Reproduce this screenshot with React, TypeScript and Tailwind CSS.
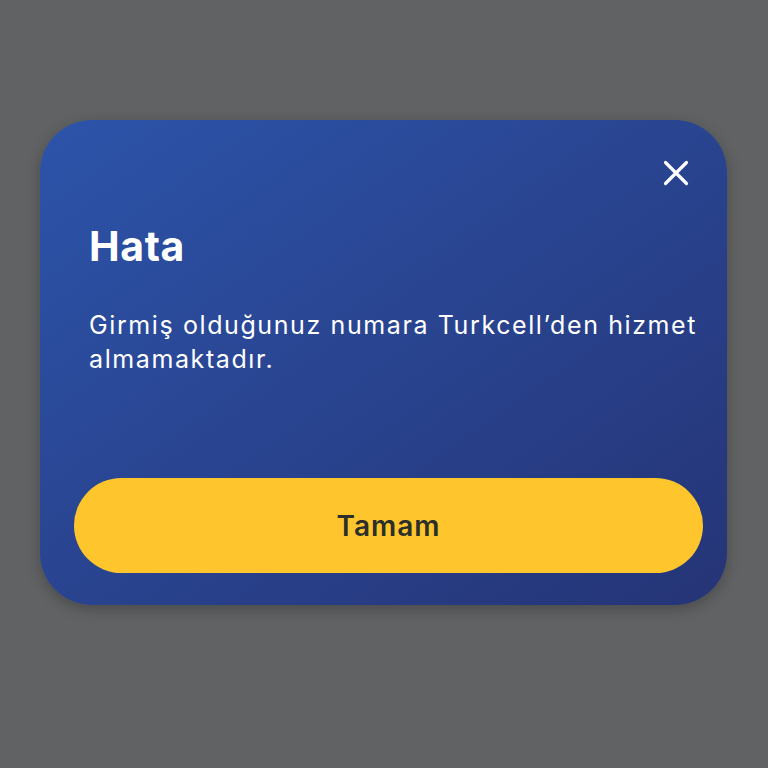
import React from "react";

function CloseIcon() {
  return (
    <svg width="26" height="26" viewBox="0 0 26 26" fill="none">
      <path d="M2.5 2.5L23.5 23.5M23.5 2.5L2.5 23.5" stroke="white" strokeWidth="3.2" strokeLinecap="round" />
    </svg>
  );
}

export default function App() {
  return (
    <div
      className="min-h-screen w-full bg-[#616263] pt-[120px] pl-[40px]"
      style={{ fontFamily: "Inter, 'Noto Sans', sans-serif" }}
    >
      <div className="w-[687px] h-[485px] rounded-[52px] bg-linear-to-br from-[#2c54aa] to-[#253476] shadow-[0_4px_14px_rgba(0,0,0,0.25)] flex flex-col">
        <div className="flex justify-end pt-[40px] pr-[38px]">
          <button className="w-[26px] h-[26px] flex items-center justify-center">
            <CloseIcon />
          </button>
        </div>
        <h1 className="pl-[49px] mt-[36px] text-[41px] leading-[48px] font-bold text-white tracking-[0.6px]">
          Hata
        </h1>
        <p className="pl-[49px] pr-[20px] mt-[38px] text-[25px] leading-[34px] text-white tracking-[1.6px]">
          Girmiş olduğunuz numara Turkcell’den hizmet almamaktadır.
        </p>
        <div className="flex-1" />
        <button className="ml-[34px] mr-[24px] mb-[32px] h-[95px] rounded-full bg-[#fec62c] text-[#2b2e2b] text-[28px] font-semibold tracking-[1px]">
          Tamam
        </button>
      </div>
    </div>
  );
}
